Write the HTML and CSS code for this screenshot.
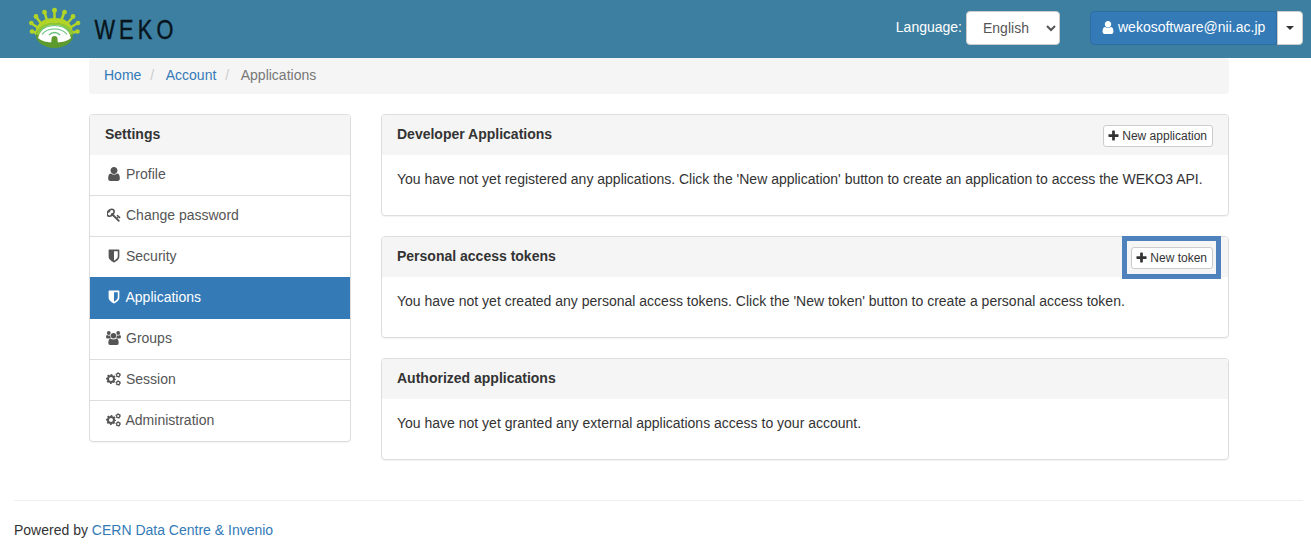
FILE: index.html
```
<!DOCTYPE html>
<html lang="en">
<head>
<meta charset="utf-8">
<title>Applications - WEKO</title>
<link rel="stylesheet" href="styles.css">
</head>
<body>
<svg class="sprite" width="0" height="0" aria-hidden="true">
  <symbol id="user" viewBox="128 128 1536 1536"><path d="M1536 1399q0 109-62.500 187t-150.500 78h-854q-88 0-150.500-78t-62.500-187q0-85 8.500-160.500t31.500-152 58.500-131 94-89 134.500-34.500q131 128 313 128t313-128q76 0 134.500 34.500t94 89 58.500 131 31.500 152 8.500 160.500zm-256-887q0 159-112.500 271.500t-271.500 112.500-271.500-112.500-112.500-271.500 112.500-271.500 271.500-112.500 271.500 112.500 112.500 271.500z"/></symbol>
  <symbol id="key" viewBox="80 80 1664 1664"><path d="M832 512q0-80-56-136t-136-56-136 56-56 136q0 42 19 83-41-19-83-19-80 0-136 56t-56 136 56 136 136 56 136-56 56-136q0-42-19-83 41 19 83 19 80 0 136-56t56-136zm851 704q0 17-49 66t-66 49q-9 0-28.500-16t-36.500-33-38.500-40-24.500-26l-96 96 220 220q28 28 28 68 0 42-39 81t-81 39q-40 0-68-28l-671-671q-176 131-365 131-163 0-265.500-102.500t-102.500-265.500q0-160 95-313t248-248 313-95q163 0 265.500 102.500t102.500 265.500q0 189-131 365l355 355 96-96q-3-3-26-24.500t-40-38.500-33-36.500-16-28.500q0-17 49-66t66-49q13 0 23 10 6 6 46 44.500t82 79.500 86.500 86 73 78 28.500 41z"/></symbol>
  <symbol id="shield" viewBox="64 64 1664 1664"><path d="M1344 960v-640h-448v1137q119-63 213-137 235-184 235-360zm192-768v768q0 86-33.500 170.500t-83 150-118 127.500-126.500 103-121 77.500-89.500 49.500-42.500 20q-12 6-26 6t-26-6q-16-7-42.500-20t-89.500-49.500-121-77.500-126.500-103-118-127.500-83-150-33.500-170.500v-768q0-26 19-45t45-19h1152q26 0 45 19t19 45z"/></symbol>
  <symbol id="plus" viewBox="128 64 1536 1536"><path d="M1600 736v192q0 40-28 68t-68 28h-416v416q0 40-28 68t-68 28h-192q-40 0-68-28t-28-68v-416h-416q-40 0-68-28t-28-68v-192q0-40 28-68t68-28h416v-416q0-40 28-68t68-28h192q40 0 68 28t28 68v416h416q40 0 68 28t28 68z"/></symbol>
  <symbol id="users" viewBox="0 0 15 14">
    <circle cx="2.800" cy="2" r="1.900"/><circle cx="12.200" cy="2" r="1.900"/>
    <path d="M1.300 4Q3 5.200 4.300 4.200 4 6 5 7.500H1.600Q0 7.500 0 5.900 0 4 1.300 4zM13.700 4Q12 5.200 10.700 4.200 11 6 10 7.500h3.400Q15 7.500 15 5.900 15 4 13.700 4z"/>
    <circle cx="7.500" cy="4.800" r="2.700"/>
    <path d="M4.700 7.700Q7.500 9.300 10.300 7.700 12.700 7.700 12.700 12 12.700 14 11 14H4Q2.300 14 2.300 12 2.300 7.700 4.700 7.700z"/>
  </symbol>
  <symbol id="cogs" viewBox="0 0 15 14">
    <g fill="none" stroke="currentColor">
      <circle cx="5" cy="7" r="3" stroke-width="2"/>
      <circle cx="5" cy="7" r="4.400" stroke-width="1.300" stroke-dasharray="1.728 1.728" stroke-dashoffset=".864"/>
      <circle cx="12.200" cy="3" r="1.650" stroke-width="1.200"/>
      <circle cx="12.200" cy="3" r="2.400" stroke-width=".8" stroke-dasharray="1.257 1.257" stroke-dashoffset=".63"/>
      <circle cx="12.200" cy="11" r="1.650" stroke-width="1.200"/>
      <circle cx="12.200" cy="11" r="2.400" stroke-width=".8" stroke-dasharray="1.257 1.257" stroke-dashoffset=".63"/>
    </g>
  </symbol>
</svg>

<header class="topbar">
  <a class="brand" aria-label="WEKO">
    <svg width="160" height="42" viewBox="0 0 160 42">
      <g stroke="#b1d427" stroke-width="2.600" stroke-linecap="round" fill="#b1d427">
        <path d="M26.500 17V4M20 17L16.800 6M32 17l4-11M15 19L8.500 10.500M37 19l7.500-8.500M12 22L3.500 16.500M40 22l9-5.500M9 26l-5-1.500M43 26l6-1.500" fill="none"/>
        <g stroke="none"><circle cx="26.500" cy="3.200" r="2.500"/><circle cx="16.500" cy="5.200" r="2.400"/><circle cx="36.500" cy="5.200" r="2.400"/><circle cx="8" cy="9.500" r="2.400"/><circle cx="45" cy="9.500" r="2.400"/><circle cx="3.300" cy="16" r="2.300"/><circle cx="50" cy="16" r="2.300"/><circle cx="4" cy="24.500" r="2.300"/><circle cx="49.500" cy="24.500" r="2.300"/></g>
      </g>
      <path d="M7 28Q8 11 26.500 11T45 28z" fill="#b1d427"/>
      <ellipse cx="26.500" cy="28.500" rx="18.500" ry="12.500" fill="#5d9b2e"/>
      <path d="M8 27Q11.500 16 26.500 16t18.400 11L40 29H12z" fill="#8fc83a"/>
      <path d="M10 31Q14 18 26.500 18t16.500 13Q38 35.500 26.500 35.500T10 31z" fill="#fff"/>
      <g fill="none" stroke="#65c27c" stroke-width="1.100"><path d="M11.500 25Q17 18.500 26.500 18.500t15 6.500M14 27.500q4-5.500 12.500-5.500t12.500 5.500"/><path d="M21 28q2.500-2.500 5.500-2.500t5.500 2.500" stroke-width="1.500"/></g>
      <path d="M23 38l.5-6a3 3 0 1 1 6 0l.5 6z" fill="#5d9b2e"/>
      <text class="wordmark" transform="scale(.87 1.080)" x="76.400 104.600 126.200 147.700" y="29.200">WEKO</text>
    </svg>
  </a>
  <div class="tools">
    <label class="language"><span>Language:</span> <select class="lang-select"><option>English</option></select></label>
    <div class="account">
      <a class="account-name"><svg class="fa"><use href="#user"/></svg>wekosoftware@nii.ac.jp</a>
      <button class="account-toggle" aria-label="Account menu"><span class="caret"></span></button>
    </div>
  </div>
</header>

<div class="container">
  <nav class="breadcrumb"><a>Home</a><i>/</i><a>Account</a><i>/</i><span>Applications</span></nav>
  <div class="columns">
    <aside class="settings">
      <h2 class="heading">Settings</h2>
      <a class="item"><svg class="fa"><use href="#user"/></svg>Profile</a>
      <a class="item"><svg class="fa"><use href="#key"/></svg>Change password</a>
      <a class="item"><svg class="fa"><use href="#shield"/></svg>Security</a>
      <a class="item active tight"><svg class="fa"><use href="#shield"/></svg>Applications</a>
      <a class="item"><svg class="fa wide"><use href="#users"/></svg>Groups</a>
      <a class="item"><svg class="fa wide"><use href="#cogs"/></svg>Session</a>
      <a class="item tight"><svg class="fa wide"><use href="#cogs"/></svg>Administration</a>
    </aside>
    <main class="panels">
      <section class="panel">
        <div class="heading"><h2>Developer Applications</h2><a class="btn-xs"><svg class="fa"><use href="#plus"/></svg>New application</a></div>
        <p>You have not yet registered any applications. Click the 'New application' button to create an application to access the WEKO3 API.</p>
      </section>
      <section class="panel">
        <div class="heading"><h2>Personal access tokens</h2><a class="btn-xs marked"><svg class="fa"><use href="#plus"/></svg>New token</a></div>
        <p>You have not yet created any personal access tokens. Click the 'New token' button to create a personal access token.</p>
      </section>
      <section class="panel">
        <div class="heading"><h2>Authorized applications</h2></div>
        <p>You have not yet granted any external applications access to your account.</p>
      </section>
    </main>
  </div>
</div>
<footer class="footer">Powered by <a>CERN Data Centre &amp; Invenio</a></footer>
</body>
</html>
```
FILE: styles.css
```
* { box-sizing: border-box; }
body { margin: 0; background: #fff; color: #333; font: 14px/20px "Liberation Sans", Arial, sans-serif; overflow: hidden; }
h2, p { margin: 0; font-size: 14px; }
a { color: #337ab7; text-decoration: none; }
.sprite { display: block; height: 0; }
.fa { width: 14px; height: 14px; fill: currentColor; flex: none; }

.topbar { display: flex; justify-content: space-between; height: 58px; padding: 7px 8px 0 28px; background: #3d7fa1; color: #fff; }
.brand svg { display: block; }
.wordmark { font: 25px "Liberation Sans", Arial, sans-serif; fill: #07141b; stroke: #07141b; stroke-width: .4px; }
.tools { display: flex; gap: 30px; padding-top: 4px; }
.language { display: flex; align-items: center; gap: 4px; height: 34px; }
.language span { padding-bottom: 2px; }
.lang-select { width: 94px; height: 34px; padding: 6px 12px; border: 1px solid #ccc; border-radius: 4px; background: #fff; color: #555; font: inherit; }
.account { display: flex; height: 34px; }
.account-name { display: flex; align-items: center; gap: 3px; width: 187px; padding: 0 0 2px 10px; border: 1px solid #2e6da4; border-radius: 4px 0 0 4px; background: #337ab7; color: #fff; }
.account-name .fa { height: 13px; }
.account-toggle { display: grid; place-items: center; width: 26px; padding: 0; border: 1px solid #ccc; border-radius: 0 4px 4px 0; background: #fff; }
.caret { border: 4px solid transparent; border-top-color: #333; border-bottom: 0; }

.container { width: 1140px; margin: 0 auto 0 89px; }
.breadcrumb { display: flex; height: 36px; padding: 7px 15px; border-radius: 4px; background: #f5f5f5; color: #777; }
.breadcrumb i { padding: 0 11.5px 0 9px; color: #ccc; font-style: normal; }
.columns { display: grid; grid-template-columns: 262px 848px; gap: 30px; align-items: start; padding-top: 20px; }
.settings, .panel { border: 1px solid #ddd; border-radius: 4px; box-shadow: 0 1px 1px rgba(0, 0, 0, .05); overflow: hidden; }
.heading { height: 40px; padding: 9px 15px; background: #f5f5f5; font-weight: bold; }
.item { display: flex; align-items: center; gap: 5.5px; height: 41px; padding: 0 15px 2px 16.5px; border-bottom: 1px solid #ddd; color: #555; }
.item:last-child { height: 40px; padding-bottom: 2px; border: 0; }
.item .wide { width: 15px; margin: 0 -.5px 0 -.5px; }
.item.tight { gap: 5px; }
.item.active { height: 42px; margin-top: -1px; padding-bottom: 1px; border-color: #337ab7; background: #337ab7; color: #fff; }
.panels { display: grid; gap: 20px; }
.panel { height: 102px; overflow: visible; }
.panel .heading { display: flex; justify-content: space-between; border-radius: 3px 3px 0 0; }
.panel p { padding: 14px 15px; }
.btn-xs { position: relative; display: flex; align-items: center; gap: 3px; height: 22px; margin-top: 1px; padding: 0 5px 1px; border: 1px solid #ccc; border-radius: 3px; background: #fff; color: #333; font-size: 12px; font-weight: normal; }
.btn-xs .fa { width: 11px; height: 11px; margin-left: -1px; }
.marked::after { content: ""; position: absolute; inset: -12px -9px -11px -10px; border: 5px solid #4f81bd; }
.footer { margin: 40px 8px 0 14px; padding-top: 19px; border-top: 1px solid #eee; }
```
